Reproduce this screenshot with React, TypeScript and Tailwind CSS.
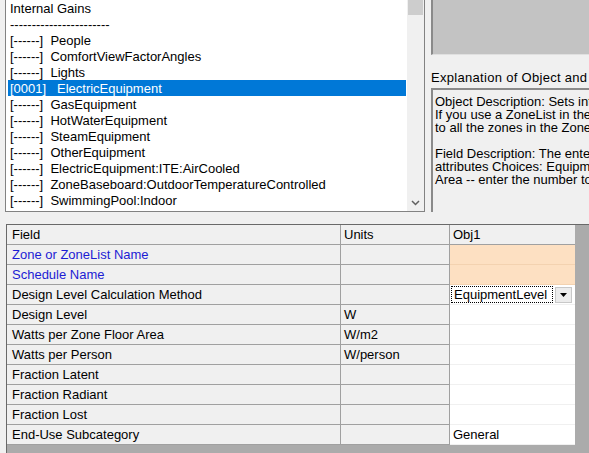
import React from 'react';

const listItems = [
  { id: '', name: 'Internal Gains', plain: true },
  { id: '', name: '-----------------------', plain: true },
  { id: '[------]', name: 'People' },
  { id: '[------]', name: 'ComfortViewFactorAngles' },
  { id: '[------]', name: 'Lights' },
  { id: '[0001]', name: 'ElectricEquipment', selected: true },
  { id: '[------]', name: 'GasEquipment' },
  { id: '[------]', name: 'HotWaterEquipment' },
  { id: '[------]', name: 'SteamEquipment' },
  { id: '[------]', name: 'OtherEquipment' },
  { id: '[------]', name: 'ElectricEquipment:ITE:AirCooled' },
  { id: '[------]', name: 'ZoneBaseboard:OutdoorTemperatureControlled' },
  { id: '[------]', name: 'SwimmingPool:Indoor' },
];

const explanation = [
  'Object Description: Sets internal gains for electric equipment in the zone.',
  'If you use a ZoneList in the Zone or ZoneList name field then this definition applies',
  'to all the zones in the ZoneList.',
  '',
  'Field Description:  The entered calculation method is used to create the maximum amount of electric equipment',
  'attributes Choices: EquipmentLevel => Design Level -- simply enter power input of equipment',
  'Area -- enter the number to apply.  Value * Floor Area = Equipment Level',
];

const rows = [
  { field: 'Zone or ZoneList Name', units: '', value: '', link: true, required: true },
  { field: 'Schedule Name', units: '', value: '', link: true, required: true },
  { field: 'Design Level Calculation Method', units: '', value: 'EquipmentLevel', combo: true },
  { field: 'Design Level', units: 'W', value: '' },
  { field: 'Watts per Zone Floor Area', units: 'W/m2', value: '' },
  { field: 'Watts per Person', units: 'W/person', value: '' },
  { field: 'Fraction Latent', units: '', value: '' },
  { field: 'Fraction Radiant', units: '', value: '' },
  { field: 'Fraction Lost', units: '', value: '' },
  { field: 'End-Use Subcategory', units: '', value: 'General' },
];

export default function App() {
  return (
    <div
      className="w-[589px] h-[453px] overflow-hidden bg-[#f0f0f0] text-[13px] text-black leading-none"
      style={{ fontFamily: '"Liberation Sans", Arial, sans-serif' }}
    >
      {/* Top: class list + explanation */}
      <div className="flex h-[212px]">
        {/* Class list */}
        <div className="ml-[5px] w-[420px] h-full flex bg-white border-l border-b border-r border-[#828282]">
          <div className="flex-1 pl-[2px] pr-[1px]">
            {listItems.map((item, i) => (
              <div
                key={i}
                className={
                  item.selected
                    ? 'h-[16px] flex items-center bg-[#0078d7] text-white pl-[2px] whitespace-pre'
                    : 'h-[16px] flex items-center pl-[2px] whitespace-pre overflow-hidden'
                }
              >
                {item.plain ? item.name : `${item.id}${item.selected ? '   ' : '  '}${item.name}`}
              </div>
            ))}
          </div>
          {/* Scrollbar */}
          <div className="w-[17px] h-full bg-[#f0f0f0] flex flex-col justify-between">
            <div className="h-[15px] mx-[1px] bg-[#cdcdcd]" />
            <div className="h-[17px] flex items-center justify-center">
              <svg width="9" height="6" viewBox="0 0 9 6">
                <path d="M1 1 L4.5 4.5 L8 1" fill="none" stroke="#606060" strokeWidth="1.5" />
              </svg>
            </div>
          </div>
        </div>

        {/* Right side */}
        <div className="ml-[6px] flex-1 flex flex-col min-w-0">
          <div className="h-[55px] bg-[#c3c3c3] border-l-2 border-b border-l-[#8a8a8a] border-b-[#e0e0e0]" />
          <div className="h-[33px] flex items-center pt-[12px] whitespace-nowrap overflow-hidden tracking-[0.3px]">
            Explanation of Object and Field
          </div>
          <div className="flex-1 bg-[#f0f0f0] border-t-2 border-l-2 border-[#8a8a8a] pt-[5px] pl-[2px] overflow-hidden">
            {explanation.map((line, i) => (
              <div key={i} className="h-[13px] whitespace-nowrap leading-[13px]">
                {line}
              </div>
            ))}
          </div>
        </div>
      </div>

      {/* Bottom: field grid */}
      <div className="mt-[12px] ml-[6px] h-[229px] bg-[#ababab] border-t border-l border-[#696969]">
        <div className="grid grid-cols-[334px_109px_125px] w-[568px]">
          <div className="h-[20px] flex items-center pl-[5px] bg-[#f0f0f0] border-b border-r border-[#a0a0a0]">Field</div>
          <div className="h-[20px] flex items-center pl-[3px] bg-[#f0f0f0] border-b border-r border-[#a0a0a0]">Units</div>
          <div className="h-[20px] flex items-center pl-[3px] bg-[#f0f0f0] border-b border-[#a0a0a0]">Obj1</div>
          {rows.map((row, i) => (
            <React.Fragment key={i}>
              <div
                className={
                  row.link
                    ? 'h-[20px] flex items-center pl-[5px] bg-[#f0f0f0] border-b border-r border-[#a0a0a0] text-[#1c1cd4]'
                    : 'h-[20px] flex items-center pl-[5px] bg-[#f0f0f0] border-b border-r border-[#a0a0a0]'
                }
              >
                {row.field}
              </div>
              <div className="h-[20px] flex items-center pl-[3px] bg-[#f0f0f0] border-b border-r border-[#a0a0a0]">
                {row.units}
              </div>
              {row.combo ? (
                <div className="h-[20px] flex items-center bg-white pl-[1px] pr-[3px] border-b border-[#f0f0f0]">
                  <div className="h-[17px] flex-1 flex items-center pl-[2px] border border-dotted border-black">
                    {row.value}
                  </div>
                  <div className="ml-[2px] w-[17px] h-[16px] bg-[#ececec] border border-[#c8c8c8] flex items-center justify-center">
                    <svg width="7" height="4" viewBox="0 0 7 4">
                      <path d="M0 0 H7 L3.5 4 Z" fill="#000" />
                    </svg>
                  </div>
                </div>
              ) : (
                <div
                  className={
                    row.required
                      ? 'h-[20px] flex items-center pl-[3px] bg-[#fde0c2] border-b border-[#f3d2b0]'
                      : 'h-[20px] flex items-center pl-[3px] bg-white border-b border-[#f0f0f0]'
                  }
                >
                  {row.value}
                </div>
              )}
            </React.Fragment>
          ))}
        </div>
      </div>
    </div>
  );
}
